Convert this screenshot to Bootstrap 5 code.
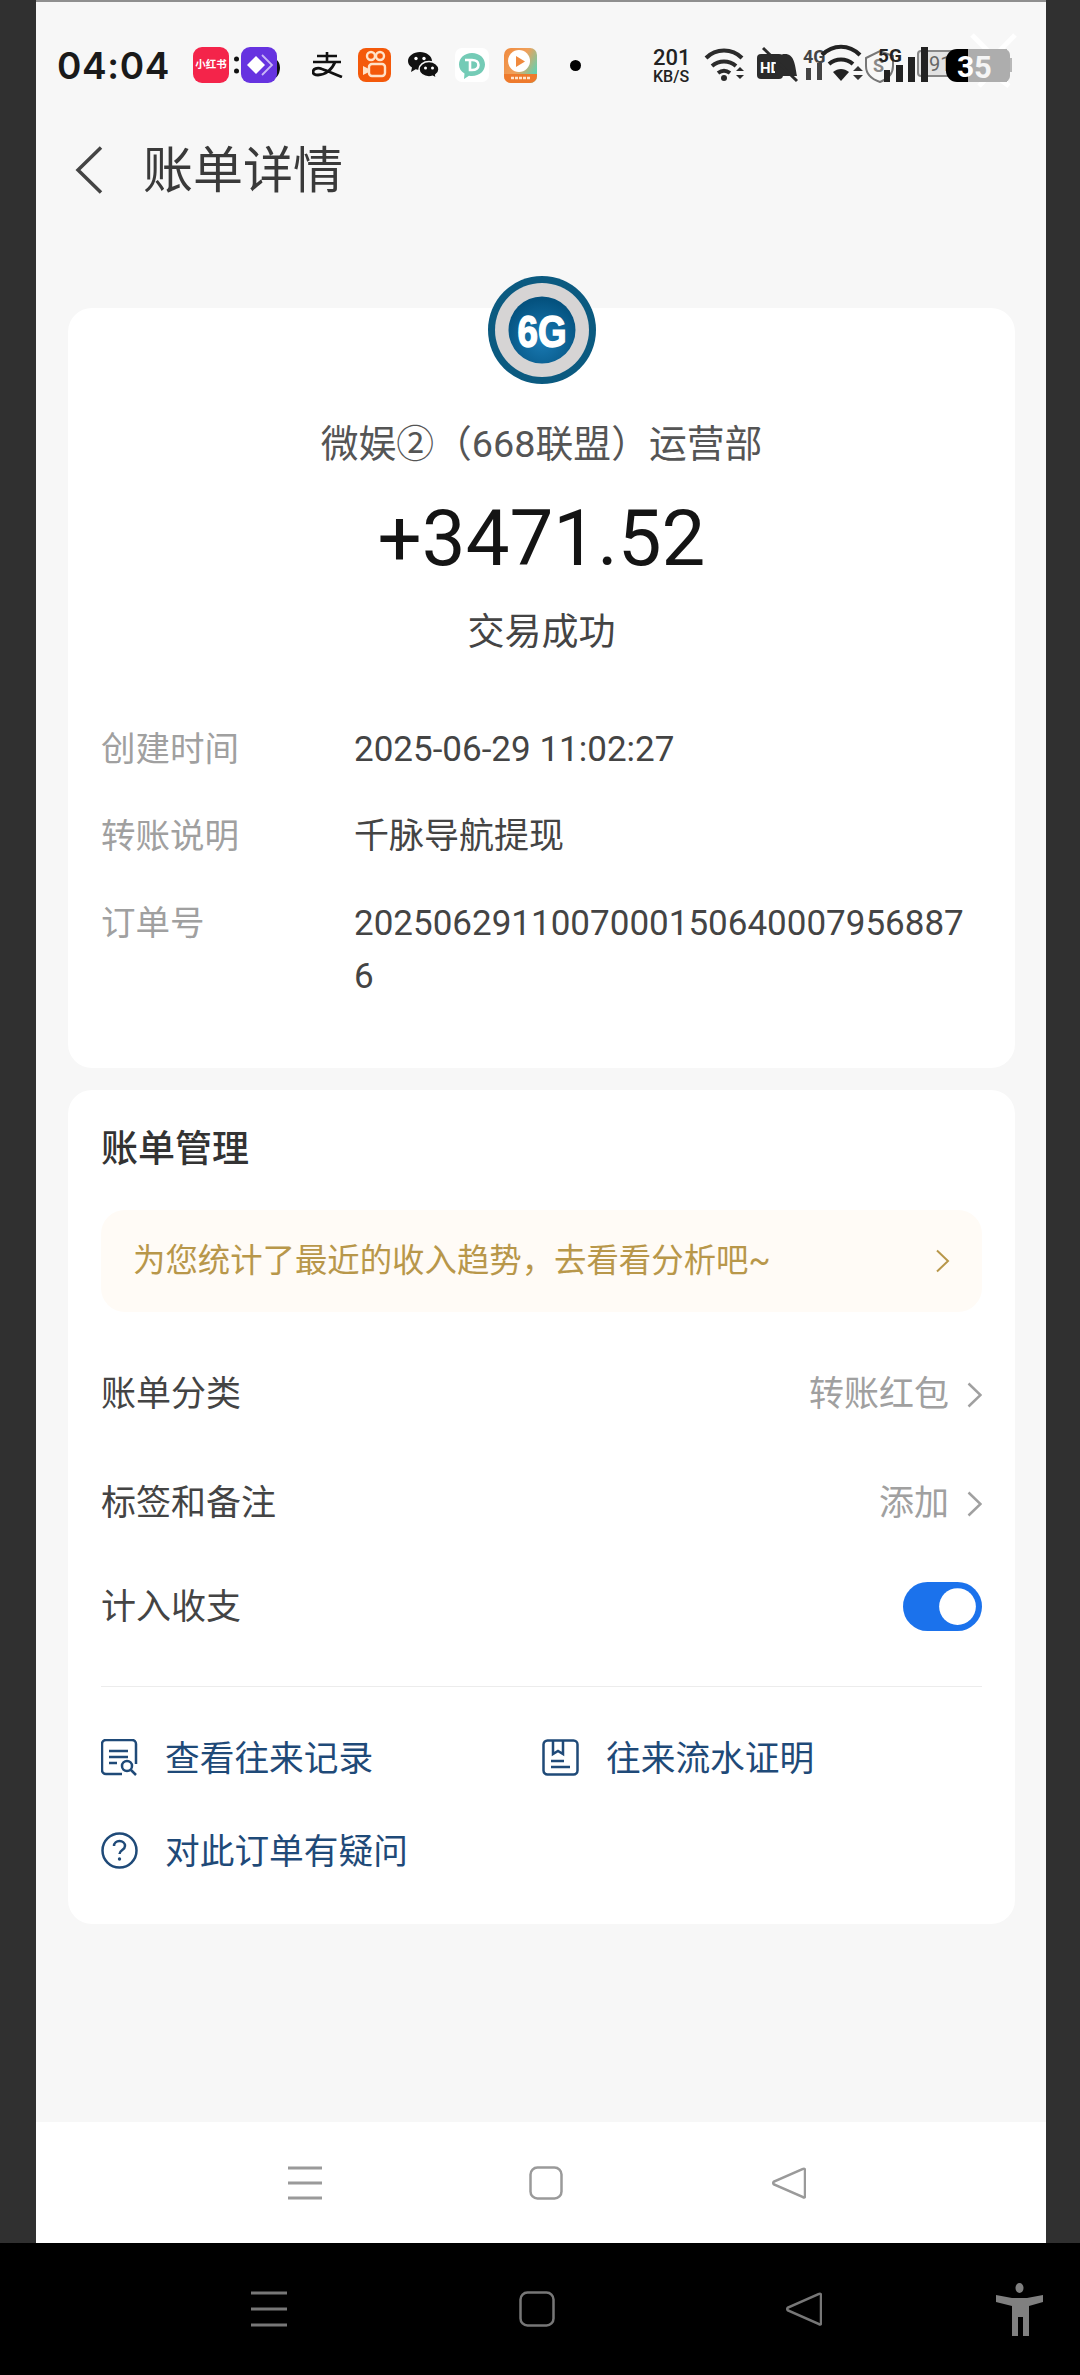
<!DOCTYPE html>
<html lang="zh-CN">
<head>
    <meta charset="UTF-8">
    <meta name="viewport" content="width=device-width, initial-scale=1.0">
    <title>账单详情</title>

    <!-- Bootstrap CSS -->
    <link href="https://cdn.jsdelivr.net/npm/bootstrap@5.3.0/dist/css/bootstrap.min.css" rel="stylesheet">

    <style>
        html, body {
            height: 2375px;
            overflow: hidden;
        }
        body {
            background-color: #303030;
            font-family: Roboto, "Noto Sans CJK SC", sans-serif;
            color: #444;
        }
        svg {
            display: block;
            flex-shrink: 0;
        }
        .screen {
            height: 2243px;
            margin: 0 34px 0 36px;
            background-color: #f7f7f7;
            border-top: 2px solid #8f8f8f;
        }
        .status-row {
            height: 126px;
            padding-left: 21px;
        }
        .clock {
            width: 112px;
            font-family: Inter, Roboto, sans-serif;
            font-size: 37px;
            font-weight: 600;
            line-height: 1;
            color: #1a1a1a;
            letter-spacing: 0.6px;
            white-space: nowrap;
        }
        .xhs-tile {
            width: 36px;
            height: 36px;
            margin-left: 24px;
            border-radius: 9px;
            background-color: #f4244a;
            color: #fff;
            font-size: 10.5px;
            font-weight: 700;
            line-height: 36px;
            text-align: center;
            white-space: nowrap;
        }
        .title-row {
            height: 84px;
            padding-left: 39px;
            gap: 40px;
        }
        .page-title {
            font-size: 50px;
            line-height: 1;
            color: #3a3a3a;
            margin: 0;
            padding-top: 2px;
            font-weight: 400;
        }
        .sheet {
            margin: 0 31px 0 32px;
            border: 0;
            border-radius: 24px;
            background-color: #fff;
            padding: 0 33px;
            color: #444;
            font-size: 35px;
            line-height: 52px;
        }
        .sheet-top {
            margin-top: 96px;
            height: 760px;
        }
        .sheet-manage {
            margin-top: 22px;
            height: 834px;
            padding-top: 34px;
        }
        .logo-mark {
            margin-top: -32px;
        }
        .payee {
            margin-top: 34px;
            font-size: 37.8px;
            color: #555;
        }
        .amount {
            margin-top: 19px;
            font-size: 78px;
            line-height: 100px;
            color: #141414;
        }
        .result {
            margin-top: 18px;
            font-size: 37px;
            color: #444;
        }
        .info-list {
            margin-top: 64px;
            gap: 34px;
            line-height: 53px;
        }
        .info-label {
            width: 253px;
            flex-shrink: 0;
            color: #a0a0a0;
            font-size: 34.5px;
        }
        .info-value {
            width: 628px;
            word-break: break-all;
        }
        .manage-title {
            font-size: 37px;
            font-weight: 500;
            color: #333;
        }
        .tip-bar {
            height: 102px;
            margin-top: 34px;
            padding: 0 32px;
            border-radius: 24px;
            background-color: #fffbf6;
            color: #b8974a;
            font-size: 32.4px;
        }
        .set-row {
            height: 52px;
        }
        .set-first {
            margin-top: 57px;
        }
        .set-second {
            margin-top: 57px;
        }
        .set-third {
            margin-top: 50px;
        }
        .set-side {
            gap: 18px;
            color: #a0a0a0;
        }
        .nudge-text {
            padding-top: 3px;
        }
        .form-switch.switch-box {
            padding: 0;
            margin: 0;
            min-height: 0;
        }
        .form-switch.switch-box .form-check-input {
            width: 79px;
            height: 49px;
            margin: 0;
            border: 0;
            background-color: #1b72ec;
            float: none;
            display: block;
        }
        .sep-line {
            margin-top: 54px;
            height: 1px;
            background-color: #ececec;
        }
        .link-row {
            margin-top: 43px;
        }
        .link-row + .link-row {
            margin-top: 38px;
        }
        .link-cell {
            gap: 27px;
            color: #1f4a78;
            font-size: 34.7px;
        }
        .link-wide {
            width: 441px;
        }
        .tab-light {
            height: 121px;
            background-color: #fff;
        }
        .tab-dark {
            height: 132px;
            background-color: #000;
        }
        .tab-light .nav-menu {
            margin-left: 252px;
        }
        .tab-light .nav-home {
            margin-left: 207px;
        }
        .tab-light .nav-back {
            margin-left: 209px;
        }
        .tab-dark .nav-menu {
            margin-left: 251px;
        }
        .tab-dark .nav-home {
            margin-left: 232px;
        }
        .tab-dark .nav-back {
            margin-left: 231px;
        }
        .tab-dark .nav-person {
            margin-left: 174px;
        }
    </style>
</head>
<body>

<div class="screen d-flex flex-column">

    <!-- Status bar -->
    <div class="status-row d-flex align-items-center">
        <div class="clock">04:04</div>
        <div class="xhs-tile">小红书</div>
        <svg class="ms-1" width="48" height="36" viewBox="0 0 48 36">
            <circle cx="3.500" cy="12" r="2.500" fill="#111"/>
            <circle cx="3.500" cy="24" r="2.500" fill="#111"/>
            <path d="M42 14c4 3 4 10 0 15" fill="none" stroke="#111" stroke-width="4"/>
            <rect x="8" width="36" height="36" rx="9" fill="#6633e0"/>
            <path d="M14 18l9-9 9 9-9 9z" fill="#fff"/>
            <path d="M29 8l10 10-10 10" fill="none" stroke="#c9b6f7" stroke-width="1.800"/>
        </svg>
        <svg style="margin-left:31px" width="32" height="26" viewBox="0 0 32 26">
            <path d="M5 4h20M15 0v9M1 10h28" fill="none" stroke="#111" stroke-width="2.600"/>
            <path d="M23 10c-3 8-10 13-17 13-3 0-5-1-5-3 0-3 4-5 9-3 6 2 12 5 20 8" fill="none" stroke="#111" stroke-width="2.800"/>
        </svg>
        <svg style="margin-left:14px" width="33" height="34" viewBox="0 0 33 34">
            <rect width="33" height="34" rx="8" fill="#f4590a"/>
            <circle cx="13" cy="8" r="4" fill="none" stroke="#ffe2c8" stroke-width="2.400"/>
            <circle cx="22" cy="8" r="4" fill="none" stroke="#ffe2c8" stroke-width="2.400"/>
            <rect x="11" y="16" width="16" height="12" rx="3" fill="none" stroke="#ffe2c8" stroke-width="2.400"/>
            <path d="M5 18l6 3v3l-6 3z" fill="#ffe2c8"/>
        </svg>
        <svg style="margin-left:17px" width="31" height="27" viewBox="0 0 31 27">
            <path d="M12 0c6.500 0 12 4 12 9 0 5-5.500 9-12 9-1.500 0-3-.2-4.300-.7L3 20l1-4.500C1.500 14 0 11.600 0 9c0-5 5.500-9 12-9z" fill="#111"/>
            <circle cx="8" cy="6.500" r="1.700" fill="#fff"/>
            <circle cx="16" cy="6.500" r="1.700" fill="#fff"/>
            <path d="M21 9.500c5.500 0 10 3.500 10 7.800 0 2.400-1.300 4.400-3.300 5.700l.8 3.500-3.800-2.200c-1.200.4-2.400.6-3.700.6-5.500 0-10-3.400-10-7.600s4.500-7.800 10-7.800z" fill="#111" stroke="#f7f7f7" stroke-width="1.500"/>
            <circle cx="17.500" cy="16" r="1.500" fill="#fff"/>
            <circle cx="24.500" cy="16" r="1.500" fill="#fff"/>
        </svg>
        <svg style="margin-left:16px" width="34" height="34" viewBox="0 0 34 34">
            <rect width="34" height="34" rx="7" fill="#fff"/>
            <path d="M17 5c7.500 0 13 5 13 11.500S24.500 28 17 28c-1 0-2-.1-3-.3L9 31l.5-5.500C6 23.500 4 20.300 4 16.500 4 10 9.500 5 17 5z" fill="#74cbb6"/>
            <path d="M10 12h7c4 0 6.500 2 6.500 5s-2.500 5-6.500 5h-2v-9" fill="none" stroke="#fff" stroke-width="2.600"/>
        </svg>
        <svg style="margin-left:15px" width="33" height="35" viewBox="0 0 33 35">
            <defs>
                <linearGradient id="videoFill" x1="0" y1="0" x2="1" y2="0.600">
                    <stop offset="0" stop-color="#f08a3e"/>
                    <stop offset="0.550" stop-color="#f0a05a"/>
                    <stop offset="1" stop-color="#68cfae"/>
                </linearGradient>
            </defs>
            <rect width="33" height="35" rx="7" fill="url(#videoFill)"/>
            <path d="M0 26h33v2a7 7 0 0 1-7 7H7a7 7 0 0 1-7-7z" fill="#ee7a2c"/>
            <circle cx="15" cy="13" r="11" fill="#fff"/>
            <path d="M12 8l9 5.500-9 5.500z" fill="#f08a3e"/>
            <path d="M7 30h19" stroke="#ffe4cc" stroke-width="2.500" stroke-dasharray="3 1"/>
        </svg>
        <svg style="margin-left:33px" width="11" height="11" viewBox="0 0 11 11">
            <circle cx="5.500" cy="5.500" r="5.500" fill="#000"/>
        </svg>
        <!-- right side icons, they overlap in the screenshot -->
        <svg style="margin-left:69px" width="390" height="64" viewBox="650 33 390 64">
            <path d="M972 35l29 29M1015 35l-30 31M1001 80l8 6M985 80l-6 6" stroke="#fff" stroke-width="5" fill="none"/>
            <text x="653" y="65" font-family="Roboto" font-size="22" font-weight="500" fill="#222">201</text>
            <text x="653" y="82" font-family="Roboto" font-size="16" font-weight="500" fill="#222">KB/S</text>
            <!-- wifi 1 -->
            <g fill="none" stroke="#2b2b2b" stroke-width="4">
                <path d="M706 58c10-10 26-10 36 0"/>
                <path d="M712 66c7-6 17-6 24 0"/>
                <path d="M718 73c4-3 8-3 12 0"/>
            </g>
            <circle cx="724" cy="78" r="3" fill="#2b2b2b"/>
            <path d="M736 71l4-4 4 4zM736 75l4 4 4-4z" fill="#2b2b2b"/>
            <!-- HD and muted bell -->
            <rect x="757" y="54" width="26" height="25" rx="4" fill="#2b2b2b"/>
            <text x="760" y="73" font-family="Roboto" font-size="15" font-weight="700" fill="#fff">HD</text>
            <path d="M775 76c0-12 1-22 10-22s10 10 12 22z" fill="#2b2b2b"/>
            <path d="M763 48l34 33" stroke="#2b2b2b" stroke-width="3"/>
            <!-- 4G -->
            <text x="803" y="63" font-family="Roboto" font-size="18" font-weight="700" fill="#444">4G</text>
            <rect x="806" y="68" width="5" height="12" fill="#444"/>
            <rect x="817" y="63" width="5" height="17" fill="#444"/>
            <!-- wifi 2 -->
            <g fill="none" stroke="#222" stroke-width="4">
                <path d="M822 55c11-11 27-11 38 0"/>
                <path d="M829 64c7-6 17-6 24 0"/>
            </g>
            <path d="M833 72c5-4 11-4 16 0l-8 9z" fill="#222"/>
            <path d="M853 71l5-5 5 5zM853 75l5 5 5-5z" fill="#333"/>
            <!-- shield -->
            <path d="M866 58l14-7 13 5v10c0 8-5 13-13 16-9-3-14-8-14-16z" fill="none" stroke="#777" stroke-width="2"/>
            <text x="873" y="72" font-family="Roboto" font-size="18" font-weight="700" fill="#888">S</text>
            <!-- 5G and signal -->
            <rect x="884" y="70" width="6" height="12" fill="#222"/>
            <rect x="896" y="65" width="7" height="17" fill="#222"/>
            <rect x="908" y="57" width="7" height="25" fill="#222"/>
            <text x="878" y="62" font-family="Roboto" font-size="19" font-weight="700" fill="#222">5G</text>
            <!-- grey battery behind -->
            <rect x="918" y="51" width="44" height="25" rx="3" fill="#e2e2e2" stroke="#888" stroke-width="2"/>
            <rect x="921" y="47" width="7" height="35" fill="#222"/>
            <text x="929" y="71" font-family="Roboto" font-size="20" fill="#666">91</text>
            <!-- charge battery -->
            <rect x="968" y="49" width="39" height="33" fill="#adadad"/>
            <path d="M1002 49h2a6 6 0 0 1 6 6v21a6 6 0 0 1-6 6h-2z" fill="#adadad"/>
            <path d="M1010 58h2v14h-2z" fill="#b8b8b8"/>
            <path d="M968 49h-11a11 11 0 0 0-11 11v11a11 11 0 0 0 11 11h11z" fill="#000"/>
            <text x="957" y="77" font-family="Roboto" font-size="30" font-weight="700" fill="#fff">3</text>
            <text x="974" y="78" font-family="Roboto" font-size="31" font-weight="700" fill="#f5f5f5">5</text>
        </svg>
    </div>

    <!-- Header -->
    <div class="title-row d-flex align-items-center">
        <svg width="28" height="48" viewBox="0 0 28 48">
            <path d="M26 1.500L3 24l23 22.500" fill="none" stroke="#444" stroke-width="3.500"/>
        </svg>
        <h1 class="page-title">账单详情</h1>
    </div>

    <!-- Bill card -->
    <div class="card sheet sheet-top">
        <svg class="logo-mark mx-auto" width="108" height="108" viewBox="0 0 108 108">
            <defs>
                <radialGradient id="logoBlue" cx="0.500" cy="0.650" r="0.600">
                    <stop offset="0" stop-color="#1a7bb5"/>
                    <stop offset="1" stop-color="#04527f"/>
                </radialGradient>
            </defs>
            <circle cx="54" cy="54" r="54" fill="#0b5a80"/>
            <circle cx="54" cy="54" r="47" fill="#d6d4d4"/>
            <circle cx="54" cy="54" r="33.500" fill="url(#logoBlue)"/>
            <text x="54" y="71" text-anchor="middle" font-family="Liberation Sans" font-size="45" font-weight="700" fill="#fff" stroke="#fff" stroke-width="1.500" textLength="49" lengthAdjust="spacingAndGlyphs">6G</text>
        </svg>
        <div class="payee text-center">微娱②（668联盟）运营部</div>
        <div class="amount text-center">+3471.52</div>
        <div class="result text-center">交易成功</div>
        <div class="info-list d-flex flex-column">
            <div class="d-flex">
                <div class="info-label">创建时间</div>
                <div class="info-value">2025-06-29 11:02:27</div>
            </div>
            <div class="d-flex">
                <div class="info-label">转账说明</div>
                <div class="info-value">千脉导航提现</div>
            </div>
            <div class="d-flex">
                <div class="info-label">订单号</div>
                <div class="info-value">20250629110070001506400079568876</div>
            </div>
        </div>
    </div>

    <!-- Manage card -->
    <div class="card sheet sheet-manage">
        <div class="manage-title">账单管理</div>
        <div class="tip-bar d-flex align-items-center justify-content-between">
            <span>为您统计了最近的收入趋势，去看看分析吧~</span>
            <svg width="15" height="24" viewBox="0 0 15 24">
                <path d="M2 1.500L13 12 2 22.500" fill="none" stroke="#b8974a" stroke-width="2"/>
            </svg>
        </div>
        <div class="set-row set-first d-flex align-items-center justify-content-between">
            <span>账单分类</span>
            <span class="set-side d-flex align-items-center">转账红包
                <svg width="15" height="26" viewBox="0 0 15 26">
                    <path d="M1.500 1.500L13.500 13 1.500 24.500" fill="none" stroke="#a0a0a0" stroke-width="2.500"/>
                </svg>
            </span>
        </div>
        <div class="set-row set-second d-flex align-items-center justify-content-between">
            <span>标签和备注</span>
            <span class="set-side d-flex align-items-center">添加
                <svg width="15" height="26" viewBox="0 0 15 26">
                    <path d="M1.500 1.500L13.500 13 1.500 24.500" fill="none" stroke="#a0a0a0" stroke-width="2.500"/>
                </svg>
            </span>
        </div>
        <div class="set-row set-third d-flex align-items-center justify-content-between">
            <span class="nudge-text">计入收支</span>
            <div class="form-check form-switch switch-box">
                <input class="form-check-input" type="checkbox" role="switch" checked aria-label="计入收支">
            </div>
        </div>
        <div class="sep-line"></div>
        <div class="link-row d-flex">
            <div class="link-cell link-wide d-flex align-items-center">
                <svg width="37" height="37" viewBox="0 0 37 37">
                    <g fill="none" stroke="#1f4a78" stroke-width="2.500">
                        <path d="M21 35H5a4 4 0 0 1-4-4V5a4 4 0 0 1 4-4h26a4 4 0 0 1 4 4v20"/>
                        <path d="M8 12h19M8 18h19M8 24h8"/>
                        <circle cx="26" cy="27" r="5"/>
                        <path d="M30 31l5 5"/>
                    </g>
                </svg>
                <span class="nudge-text">查看往来记录</span>
            </div>
            <div class="link-cell d-flex align-items-center">
                <svg width="37" height="37" viewBox="0 0 37 37">
                    <g fill="none" stroke="#1f4a78" stroke-width="2.500">
                        <rect x="1.500" y="1.500" width="34" height="34" rx="4"/>
                        <path d="M11 2v13l5-3 5 3V2"/>
                        <path d="M9 22h13M9 28h19"/>
                    </g>
                </svg>
                <span class="nudge-text">往来流水证明</span>
            </div>
        </div>
        <div class="link-row d-flex">
            <div class="link-cell d-flex align-items-center">
                <svg width="37" height="37" viewBox="0 0 37 37">
                    <circle cx="18.500" cy="18.500" r="17" fill="none" stroke="#1f4a78" stroke-width="2.500"/>
                    <path d="M13 14c0-3 2.500-5 5.500-5s5.500 2 5.500 5c0 4-5.500 4-5.500 8" fill="none" stroke="#1f4a78" stroke-width="2.500"/>
                    <circle cx="18.500" cy="27" r="1.700" fill="#1f4a78"/>
                </svg>
                <span class="nudge-text">对此订单有疑问</span>
            </div>
        </div>
    </div>

    <!-- App navigation -->
    <div class="tab-light mt-auto d-flex align-items-center">
        <svg class="nav-menu" width="34" height="34" viewBox="0 0 34 34">
            <path d="M0 2h34M0 17h34M0 32h34" stroke="#9a9a9a" stroke-width="3"/>
        </svg>
        <svg class="nav-home" width="34" height="34" viewBox="0 0 34 34">
            <rect x="1.500" y="1.500" width="31" height="31" rx="7" fill="none" stroke="#9a9a9a" stroke-width="2.500"/>
        </svg>
        <svg class="nav-back" width="34" height="34" viewBox="0 0 34 34">
            <path d="M31 3c1-.6 2-.2 2 1v26c0 1.500-1 2-2 1L2 18.500c-1-1-1-2 0-3z" fill="none" stroke="#9a9a9a" stroke-width="2.500"/>
        </svg>
    </div>
</div>

<!-- System navigation -->
<div class="tab-dark d-flex align-items-center">
    <svg class="nav-menu" width="36" height="36" viewBox="0 0 36 36">
        <path d="M0 2h36M0 18h36M0 34h36" stroke="#777" stroke-width="3"/>
    </svg>
    <svg class="nav-home" width="36" height="36" viewBox="0 0 36 36">
        <rect x="1.500" y="1.500" width="33" height="33" rx="7" fill="none" stroke="#777" stroke-width="2.500"/>
    </svg>
    <svg class="nav-back" width="36" height="36" viewBox="0 0 36 36">
        <path d="M33 3c1-.6 2-.2 2 1v28c0 1.500-1 2-2 1L2 19.500c-1-1-1-2 0-3z" fill="none" stroke="#777" stroke-width="2.500"/>
    </svg>
    <svg class="nav-person" width="47" height="53" viewBox="0 0 47 53">
        <ellipse cx="23.500" cy="5" rx="4" ry="5" fill="#808080"/>
        <path d="M0 12l16 3h15l16-3v7l-14 4v30h-6V34h-5v19h-6V23L0 19z" fill="#808080"/>
    </svg>
</div>

<!-- Bootstrap JS -->
<script src="https://cdn.jsdelivr.net/npm/bootstrap@5.3.0/dist/js/bootstrap.bundle.min.js"></script>
</body>
</html>
